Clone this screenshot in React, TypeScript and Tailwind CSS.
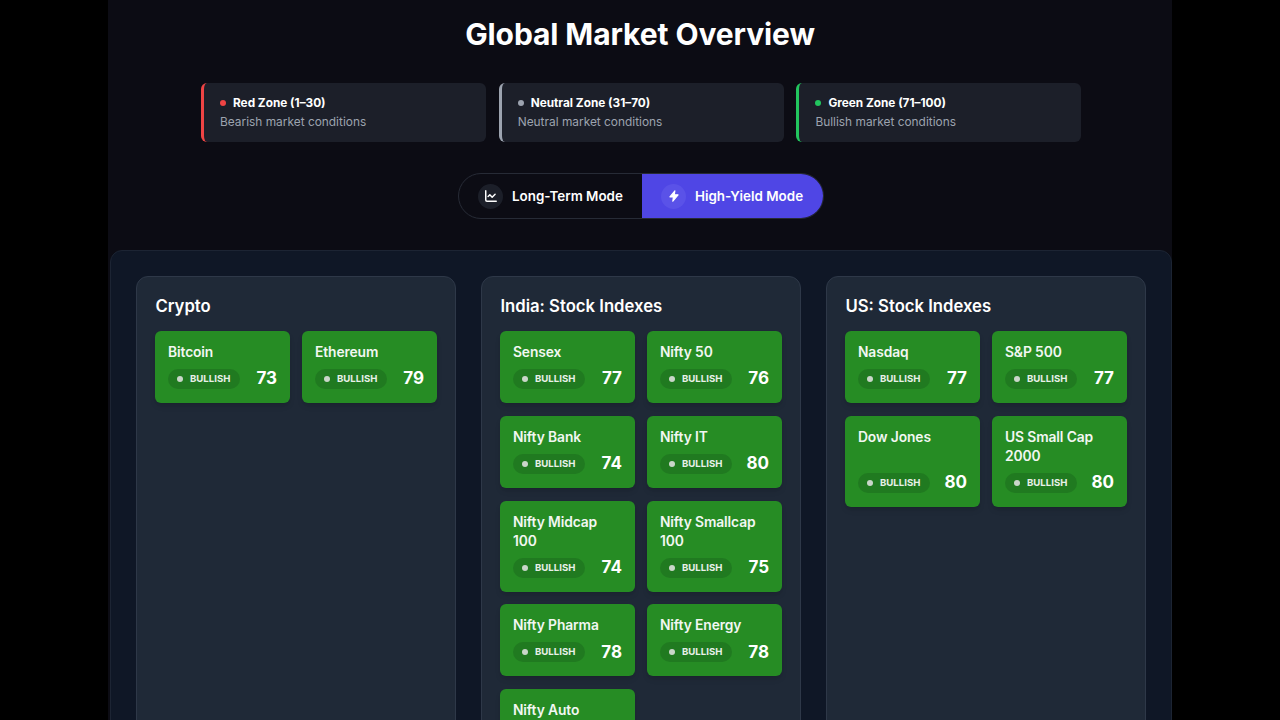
import React from 'react';
import { LineChart } from 'lucide-react';

type Market = { name: string; score: number };

const crypto: Market[] = [
    { name: 'Bitcoin', score: 73 },
    { name: 'Ethereum', score: 79 },
];

const india: Market[] = [
    { name: 'Sensex', score: 77 },
    { name: 'Nifty 50', score: 76 },
    { name: 'Nifty Bank', score: 74 },
    { name: 'Nifty IT', score: 80 },
    { name: 'Nifty Midcap 100', score: 74 },
    { name: 'Nifty Smallcap 100', score: 75 },
    { name: 'Nifty Pharma', score: 78 },
    { name: 'Nifty Energy', score: 78 },
    { name: 'Nifty Auto', score: 77 },
];

const us: Market[] = [
    { name: 'Nasdaq', score: 77 },
    { name: 'S&P 500', score: 77 },
    { name: 'Dow Jones', score: 80 },
    { name: 'US Small Cap 2000', score: 80 },
];

const BoltIcon = () => (
    <svg xmlns="http://www.w3.org/2000/svg" className="h-[14px] w-[14px]" viewBox="0 0 24 24" fill="currentColor" stroke="currentColor" strokeWidth={2} strokeLinejoin="round">
        <path d="M13.5 3 5 13.5h6L10 21l9-11h-6.5z" />
    </svg>
);

const MarketCard = ({ market }: { market: Market }) => (
    <div className="flex flex-col justify-between rounded-md bg-[#268c24] pt-3 pb-[10px] pl-[12.6px] pr-[12.6px] shadow-md">
        <div className="text-[13.8px] leading-[19px] font-semibold text-[#f2f7f2] tracking-[-0.1px]">{market.name}</div>
        <div className="mt-[3px] flex h-7 items-center justify-between">
            <div className="flex h-5 w-[72px] items-center rounded-full bg-[#207a20] pl-[9px]">
                <span className="h-[6px] w-[6px] rounded-full bg-[#c9d6c9]" />
                <span className="ml-[7px] text-[9.6px] leading-5 font-bold text-[#e8f0e8]">BULLISH</span>
            </div>
            <span className="text-[17px] font-bold text-white">{market.score}</span>
        </div>
    </div>
);

const Column = ({ title, markets }: { title: string; markets: Market[] }) => (
    <section className="rounded-t-xl border border-[#2e3848] bg-[#1f2937] px-[18.4px] pt-[19px] pb-6">
        <h2 className="text-[16.7px] leading-[21px] font-semibold text-white mb-[14px]">{title}</h2>
        <div className="grid grid-cols-2 gap-x-[12.8px] gap-y-[12.8px]">
            {markets.map(m => <MarketCard key={m.name} market={m} />)}
        </div>
    </section>
);

const Legend = ({ name, desc, border, dot }: { name: string; desc: string; border: string; dot: string }) => (
    <div className={`h-[59px] w-[285px] rounded-md border-l-[3px] bg-[#1c1f29] pl-[16px] pt-[11px] ${border}`}>
        <div className="flex items-center text-[11.8px] leading-[18px] font-bold text-white">
            <span className={`mr-[7px] h-[6px] w-[6px] rounded-full ${dot}`} />
            {name}
        </div>
        <div className="mt-[1px] text-[11.9px] leading-[18px] text-[#9ca3af]">{desc}</div>
    </div>
);

export default function App() {
    return (
        <div className="flex h-[720px] justify-center overflow-hidden bg-black font-['Inter',sans-serif]">
            <main className="h-full w-[1064px] overflow-hidden bg-[#0c0c14]">
                <h1 className="pt-[14px] text-center text-[30px] leading-[40px] font-bold text-white tracking-[-0.1px]">Global Market Overview</h1>

                <div className="mt-[29px] ml-[93px] flex gap-[12.7px]">
                    <Legend name="Red Zone (1–30)" desc="Bearish market conditions" border="border-[#ef4444]" dot="bg-[#ef4444]" />
                    <Legend name="Neutral Zone (31–70)" desc="Neutral market conditions" border="border-[#9ca3af]" dot="bg-[#9ca3af]" />
                    <Legend name="Green Zone (71–100)" desc="Bullish market conditions" border="border-[#22c55e]" dot="bg-[#22c55e]" />
                </div>

                <div className="mt-[31px] ml-[350px]">
                    <div className="flex h-[46px] w-[366px] overflow-hidden rounded-full border border-[#272b36]">
                        <div className="flex w-[183px] items-center pl-[19px]">
                            <span className="flex h-[25px] w-[25px] items-center justify-center rounded-full bg-[#1c1f29] text-white">
                                <LineChart size={14} strokeWidth={2.5} />
                            </span>
                            <span className="ml-[9px] text-[13.4px] font-semibold text-white">Long-Term Mode</span>
                        </div>
                        <div className="flex flex-1 items-center bg-[#4f46e5] pl-[19px]">
                            <span className="flex h-[25px] w-[25px] items-center justify-center rounded-full bg-[#5a52e8] text-white">
                                <BoltIcon />
                            </span>
                            <span className="ml-[9px] text-[13.4px] font-semibold text-white">High-Yield Mode</span>
                        </div>
                    </div>
                </div>

                <div className="mt-[31px] ml-[2px] grid grid-cols-3 gap-[25px] rounded-t-xl border border-[#1c2433] bg-[#0f1726] px-[25px] pt-[25px] pb-6">
                    <Column title="Crypto" markets={crypto} />
                    <Column title="India: Stock Indexes" markets={india} />
                    <Column title="US: Stock Indexes" markets={us} />
                </div>
            </main>
        </div>
    );
}
